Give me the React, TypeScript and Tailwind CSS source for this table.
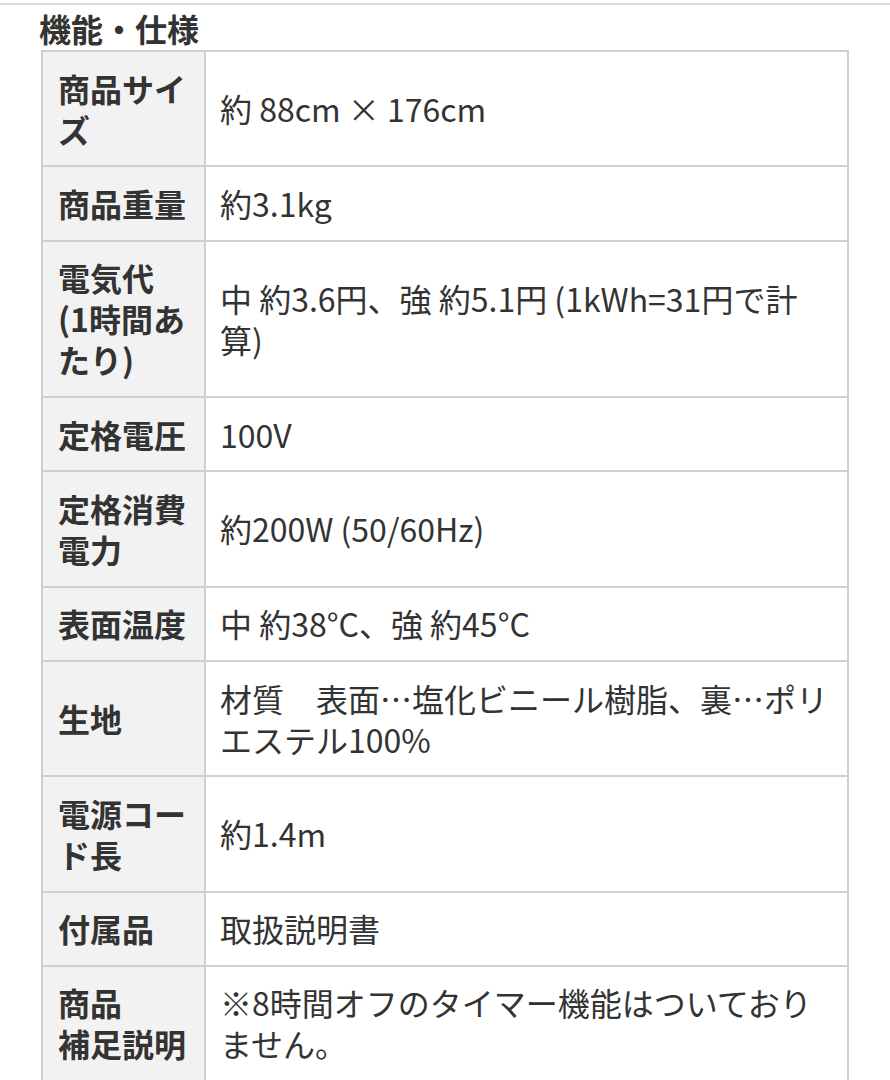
import React from 'react';

type Row = { label: React.ReactNode; value: React.ReactNode };

const rows: Row[] = [
  { label: <>商品サイ<br />ズ</>, value: '約 88cm × 176cm' },
  { label: '商品重量', value: '約3.1kg' },
  {
    label: <>電気代<br />(1時間あ<br />たり)</>,
    value: <>中 約3.6円、強 約5.1円 (1kWh=31円で計<br />算)</>,
  },
  { label: '定格電圧', value: '100V' },
  { label: <>定格消費<br />電力</>, value: '約200W (50/60Hz)' },
  { label: '表面温度', value: '中 約38°C、強 約45°C' },
  {
    label: '生地',
    value: <>材質　表面…塩化ビニール樹脂、裏…ポリ<br />エステル100%</>,
  },
  { label: <>電源コー<br />ド長</>, value: '約1.4m' },
  { label: '付属品', value: '取扱説明書' },
  {
    label: <>商品<br />補足説明</>,
    value: <>※8時間オフのタイマー機能はついており<br />ません。</>,
  },
];

const App: React.FC = () => {
  return (
    <div
      className="min-h-[1080px] w-[890px] bg-white text-[#333] overflow-hidden"
      style={{ fontFamily: '"Noto Sans CJK JP", "Noto Sans", sans-serif' }}
    >
      {/* top divider */}
      <div className="pt-[3px]">
        <div className="h-[2px] bg-[#d9d9d9]" />
      </div>

      {/* section title */}
      <h2 className="mt-[3px] mb-[2px] pl-[39px] text-[32px] leading-[40px] font-bold text-[#333]">
        機能・仕様
      </h2>

      {/* spec table */}
      <div className="ml-[41px] w-[808px] border-2 border-b-0 border-[#cfcfcf]">
        {rows.map((row, i) => (
          <div key={i} className="flex border-b-2 border-[#cfcfcf]">
            <div className="w-[163px] shrink-0 flex items-center bg-[#f2f2f2] border-r-2 border-[#cfcfcf] pl-[15px] pr-[10px] py-[15.67px] text-[32px] leading-[41px] font-bold whitespace-nowrap">
              <div>{row.label}</div>
            </div>
            <div className="flex-1 flex items-center px-[14px] py-[15.67px] text-[32px] leading-[41px] whitespace-nowrap">
              <div>{row.value}</div>
            </div>
          </div>
        ))}
      </div>
    </div>
  );
};

export default App;
